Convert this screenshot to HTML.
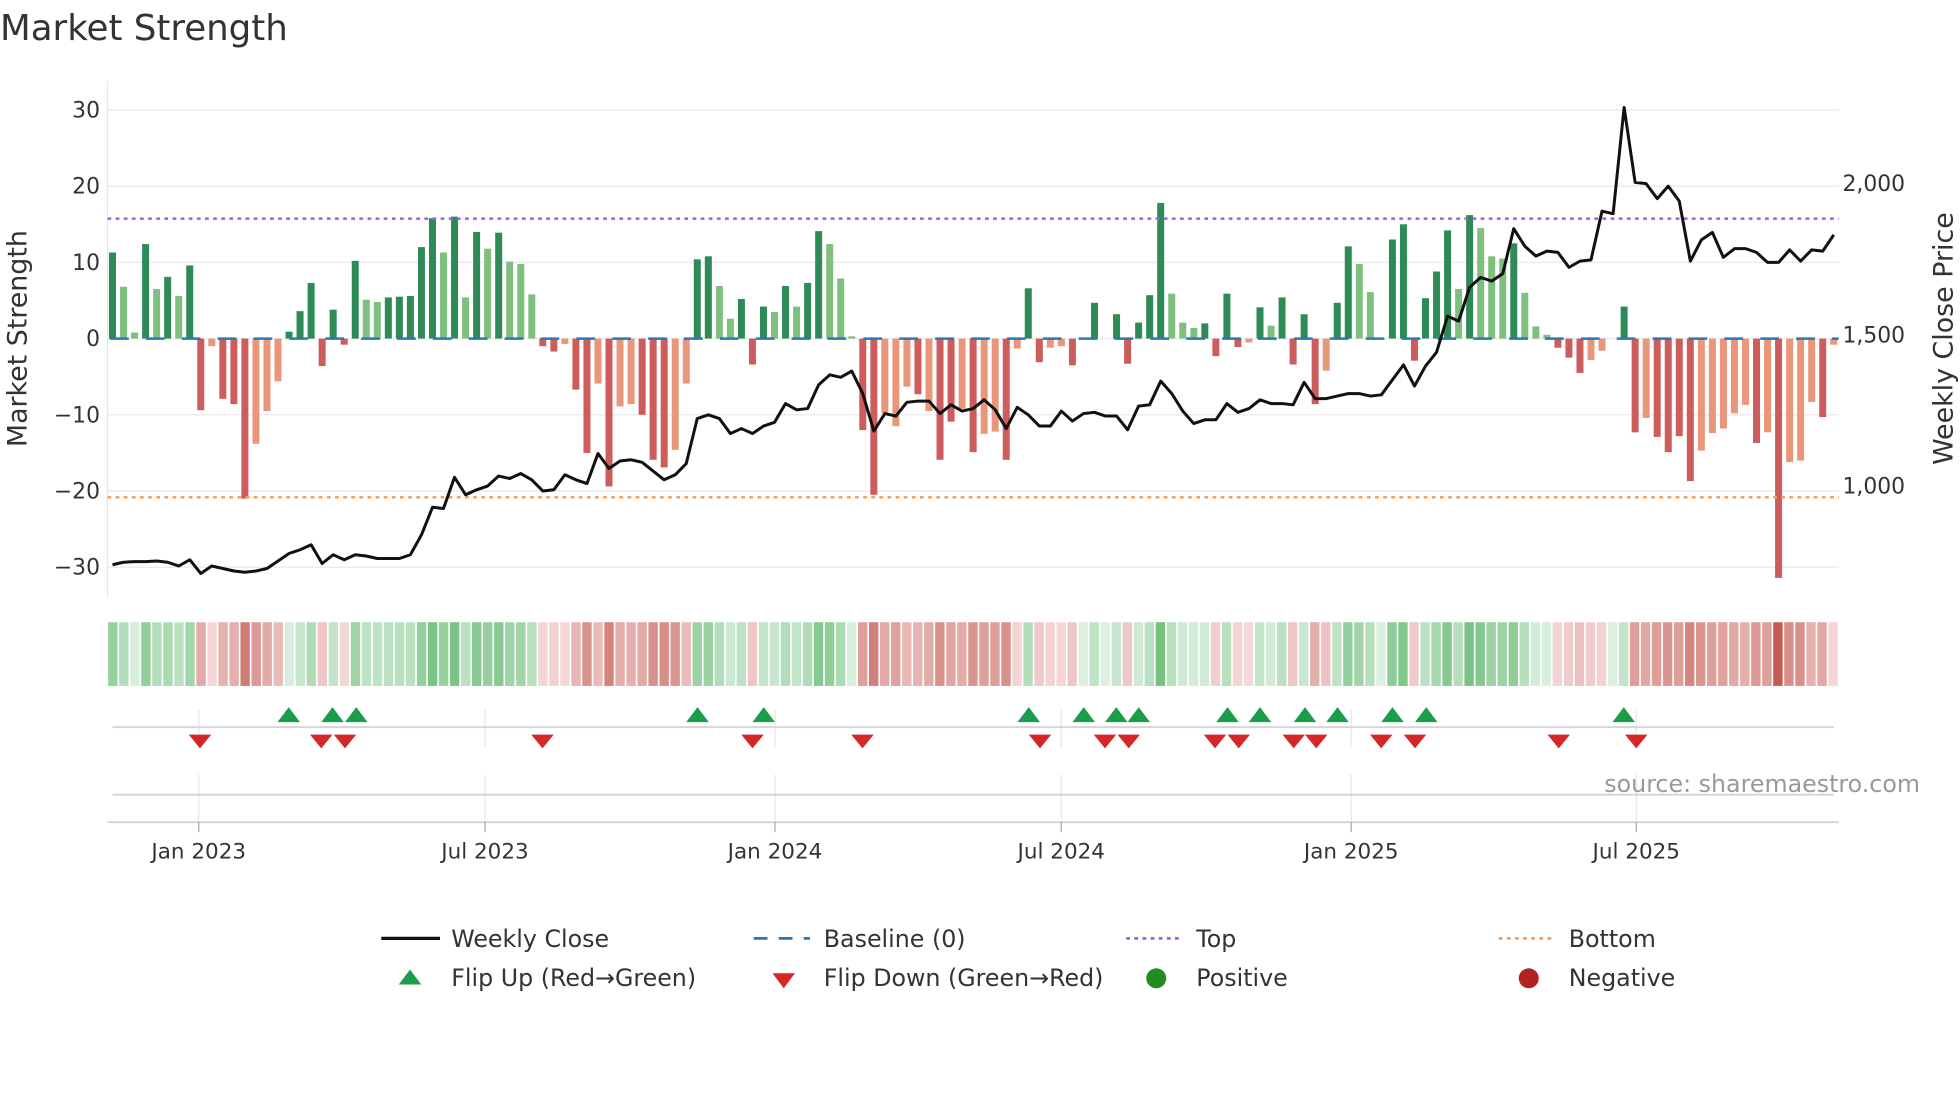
<!DOCTYPE html>
<html><head><meta charset="utf-8"><style>
html,body{margin:0;padding:0;background:#fff;width:1960px;height:1102px;overflow:hidden}
svg{display:block}
text{font-family:"DejaVu Sans","Liberation Sans",sans-serif;fill:#333}
</style></head><body>
<svg id="s" width="1960" height="1102" viewBox="0 0 1568 882" preserveAspectRatio="none" xmlns="http://www.w3.org/2000/svg">
<text x="0" y="32" font-size="28.5">Market Strength</text>
<g id="grid" stroke="#ececf0" stroke-width="1.2">
<line x1="86" x2="1471" y1="88" y2="88"/><line x1="86" x2="1471" y1="149" y2="149"/><line x1="86" x2="1471" y1="210" y2="210"/><line x1="86" x2="1471" y1="271" y2="271"/><line x1="86" x2="1471" y1="332" y2="332"/><line x1="86" x2="1471" y1="393" y2="393"/><line x1="86" x2="1471" y1="454" y2="454"/>
</g>
<line x1="86" x2="86" y1="65" y2="478" stroke="#e8e8e8" stroke-width="1"/>
<g font-size="17.5" text-anchor="end">
<text x="80" y="94">30</text><text x="80" y="155">20</text><text x="80" y="216">10</text><text x="80" y="277">0</text><text x="80" y="338">−10</text><text x="80" y="399">−20</text><text x="80" y="460">−30</text>
</g>
<g font-size="17.5">
<text x="1474" y="153">2,000</text><text x="1474" y="274">1,500</text><text x="1474" y="395">1,000</text>
</g>
<text font-size="21.5" transform="translate(21,271) rotate(-90)" text-anchor="middle">Market Strength</text>
<text font-size="21.5" transform="translate(1562,271) rotate(-90)" text-anchor="middle">Weekly Close Price</text>
<g id="bars"></g>
<line x1="86" x2="1471" y1="175" y2="175" stroke="#a35fe0" stroke-width="2" stroke-dasharray="3,3.5"/>
<line x1="86" x2="1471" y1="398" y2="398" stroke="#f0a060" stroke-width="2" stroke-dasharray="3,3.5"/>
<line x1="88" x2="1471" y1="271" y2="271" stroke="#2b77b0" stroke-width="2" stroke-dasharray="15,13.7"/>
<polyline id="price" fill="none" stroke="#111" stroke-width="2.4" stroke-linejoin="round"/>
<g id="heat"></g>
<g stroke="#e6e6ea" stroke-width="1">
<line x1="159" x2="159" y1="568" y2="598"/><line x1="388" x2="388" y1="568" y2="598"/><line x1="620" x2="620" y1="568" y2="598"/><line x1="849" x2="849" y1="568" y2="598"/><line x1="1081" x2="1081" y1="568" y2="598"/><line x1="1309" x2="1309" y1="568" y2="598"/>
<line x1="159" x2="159" y1="620" y2="658"/><line x1="388" x2="388" y1="620" y2="658"/><line x1="620" x2="620" y1="620" y2="658"/><line x1="849" x2="849" y1="620" y2="658"/><line x1="1081" x2="1081" y1="620" y2="658"/><line x1="1309" x2="1309" y1="620" y2="658"/>
</g>
<line x1="90" x2="1467" y1="582" y2="582" stroke="#d3d3d8" stroke-width="1.5"/>
<line x1="90" x2="1467" y1="636" y2="636" stroke="#d3d3d3" stroke-width="1.5"/>
<line x1="86" x2="1471" y1="658" y2="658" stroke="#d3d3d3" stroke-width="1.5"/>
<g stroke="#aaa" stroke-width="1"><line x1="159" x2="159" y1="658" y2="666"/><line x1="388" x2="388" y1="658" y2="666"/><line x1="620" x2="620" y1="658" y2="666"/><line x1="849" x2="849" y1="658" y2="666"/><line x1="1081" x2="1081" y1="658" y2="666"/><line x1="1309" x2="1309" y1="658" y2="666"/></g>
<g id="flips"></g>
<text x="1536" y="634" font-size="19" text-anchor="end" style="fill:#999">source: sharemaestro.com</text>
<g font-size="17.2" text-anchor="middle">
<text x="159" y="687">Jan 2023</text><text x="388" y="687">Jul 2023</text><text x="620" y="687">Jan 2024</text><text x="849" y="687">Jul 2024</text><text x="1081" y="687">Jan 2025</text><text x="1309" y="687">Jul 2025</text>
</g>
<g font-size="19">
<line x1="305" x2="352" y1="751" y2="751" stroke="#111" stroke-width="2.6"/>
<text x="361" y="758">Weekly Close</text>
<line x1="603" x2="648" y1="751" y2="751" stroke="#2b77b0" stroke-width="2.2" stroke-dasharray="11,9"/>
<text x="659" y="758">Baseline (0)</text>
<line x1="901" x2="946" y1="751" y2="751" stroke="#a35fe0" stroke-width="2.2" stroke-dasharray="3,3.5"/>
<text x="957" y="758">Top</text>
<line x1="1199" x2="1244" y1="751" y2="751" stroke="#f0a060" stroke-width="2.2" stroke-dasharray="3,3.5"/>
<text x="1255" y="758">Bottom</text>
<polygon points="319,788 337,788 328,776" fill="#1a9e4a"/>
<text x="361" y="789">Flip Up (Red→Green)</text>
<polygon points="618,779 636,779 627,791" fill="#d62728"/>
<text x="659" y="789">Flip Down (Green→Red)</text>
<circle cx="925" cy="783" r="8" fill="#228b22"/>
<text x="957" y="789">Positive</text>
<circle cx="1223" cy="783" r="8" fill="#b22222"/>
<text x="1255" y="789">Negative</text>
</g>
</svg>
<script>
var V=[[11.3,1],[6.8,0],[0.8,0],[12.4,1],[6.5,0],[8.1,1],[5.6,0],[9.6,1],[-9.4,1],[-1,0],[-7.9,1],[-8.6,1],[-21,1],[-13.8,0],[-9.5,0],[-5.6,0],[0.9,1],[3.6,1],[7.3,1],[-3.6,1],[3.8,1],[-0.8,1],[10.2,1],[5.1,0],[4.8,0],[5.4,1],[5.5,1],[5.6,1],[12,1],[15.8,1],[11.3,0],[16,1],[5.4,0],[14,1],[11.8,0],[13.9,1],[10.1,0],[9.8,0],[5.8,0],[-1,1],[-1.7,1],[-0.7,0],[-6.7,1],[-15,1],[-5.9,0],[-19.4,1],[-8.9,0],[-8.6,0],[-10,1],[-15.9,1],[-16.9,1],[-14.6,0],[-5.9,0],[10.4,1],[10.8,1],[6.9,0],[2.6,0],[5.2,1],[-3.4,1],[4.2,1],[3.5,0],[6.9,1],[4.2,0],[7.3,1],[14.1,1],[12.4,0],[7.9,0],[0.3,0],[-12,1],[-20.5,1],[-9.8,0],[-11.5,0],[-6.3,0],[-7.3,1],[-9.5,0],[-15.9,1],[-10.9,1],[-9.2,0],[-14.9,1],[-12.5,0],[-12.2,0],[-15.9,1],[-1.3,0],[6.6,1],[-3.1,1],[-1.2,0],[-1,0],[-3.5,1],[0,0],[4.7,1],[0,0],[3.2,1],[-3.3,1],[2.1,1],[5.7,1],[17.8,1],[5.9,0],[2.1,0],[1.4,0],[2,1],[-2.3,1],[5.9,1],[-1.1,1],[-0.5,0],[4.1,1],[1.7,0],[5.4,1],[-3.4,1],[3.2,1],[-8.6,1],[-4.2,0],[4.7,1],[12.1,1],[9.8,0],[6.1,0],[0,0],[13,1],[15,1],[-2.9,1],[5.3,1],[8.8,1],[14.2,1],[6.5,0],[16.2,1],[14.5,0],[10.8,0],[10.5,0],[12.5,1],[6,0],[1.6,0],[0.5,0],[-1.2,1],[-2.5,1],[-4.5,1],[-2.8,0],[-1.6,0],[0,0],[4.2,1],[-12.3,1],[-10.4,0],[-12.9,1],[-14.9,1],[-12.8,1],[-18.7,1],[-14.7,0],[-12.4,0],[-11.8,0],[-9.8,0],[-8.7,0],[-13.7,1],[-12.3,0],[-31.4,1],[-16.2,0],[-16,0],[-8.3,0],[-10.3,1],[-0.8,0]];
var P=[452,450,449.5,449.5,449,450,453,448,459,453,455,457,458,457,455,449,443,440,436,451,444,448,444,445,447,447,447,444,428,406,407,382,396,392,389,381,383,379,384,393,392,380,384,387,363,375,369,368,370,377,384,380,371,335,332,335,347,343,347,341,338,323,328,327,308,300,302,297,315,345,331,333,322,321,321,331,324,329,327,320,328,343,326,332,341,341,329,337,331,330,333,333,344,325,324,305,315,329,339,336,336,323,330,327,320,323,323,324,306,319,319,317,315,315,317,316,304,292,309,293,282,253,257,230,222,225,219,183,197,205,201,202,214,209,208,169,171,86,146,147,159,149,161,209,192,186,206,199,199,202,210,210,200,209,200,201,188];
var NS="http://www.w3.org/2000/svg";
function el(t,a,p){var e=document.createElementNS(NS,t);for(var k in a)e.setAttribute(k,a[k]);p.appendChild(e);return e;}
function mix(a,b,t){return "rgb("+[0,1,2].map(function(i){return Math.round(a[i]+(b[i]-a[i])*t)}).join(",")+")";}
var bars=document.getElementById("bars"),heat=document.getElementById("heat");
var dx=(1467-90)/156,pts=[];
for(var i=0;i<V.length;i++){
 var x=90+i*dx,v=V[i][0],d=V[i][1],h=Math.abs(v)*6.1;
 var c=v>=0?(d?"#2e8b57":"#80c07e"):(d?"#cd5c5c":"#e9967a");
 if(h>0.3) el("rect",{x:x-2.8,y:v>=0?271-h:271,width:5.6,height:h,fill:c},bars);
 var col;
 if(v>=0){var t=Math.min(1,v/17);col=mix([220,240,224],[116,193,128],t);}
 else{var t=Math.min(1,-v/31);col=mix([246,222,222],[196,90,82],Math.pow(t,0.8));}
 el("rect",{x:86+i*(1385/157)+0.5,y:498,width:1385/157-1.3,height:51,fill:col},heat);
 pts.push(x.toFixed(1)+","+P[i]);
}
document.getElementById("price").setAttribute("points",pts.join(" "));
var fl=document.getElementById("flips");
[231,266,285,558,611,823,867,893,911,982,1008,1044,1070,1114,1141,1299].forEach(function(x){el("polygon",{points:(x-9)+",578 "+(x+9)+",578 "+x+",566",fill:"#1a9e4a"},fl);});
[160,257,276,434,602,690,832,884,903,972,991,1035,1053,1105,1132,1247,1309].forEach(function(x){el("polygon",{points:(x-9)+",588 "+(x+9)+",588 "+x+",599",fill:"#d62728"},fl);});
</script>
</body></html>
